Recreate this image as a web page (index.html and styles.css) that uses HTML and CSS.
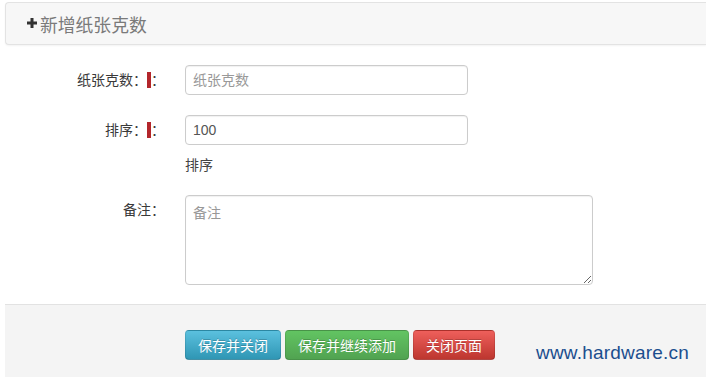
FILE: index.html
```html
<!DOCTYPE html>
<html lang="zh-CN">
<head>
  <meta charset="UTF-8" />
  <title>新增纸张克数</title>
  <link rel="stylesheet" href="styles.css">
</head>
<body>
  <div class="page">
    <!-- Heading -->
    <div class="panel-heading">
      <svg class="icon-plus" width="10" height="10" viewBox="0 0 10 10"><path d="M3.5 0h3v3.5H10v3H6.5V10h-3V6.5H0v-3h3.5z" fill="#333"/></svg>
      <span>新增纸张克数</span>
    </div>

    <!-- Form -->
    <form class="form">
      <div class="form-row">
        <label class="form-label">纸张克数：<span class="req"></span>：</label>
        <div class="form-field">
          <input class="input" type="text" placeholder="纸张克数">
        </div>
      </div>
      <div class="form-row">
        <label class="form-label">排序：<span class="req"></span>：</label>
        <div class="form-field">
          <input class="input" type="text" value="100">
          <div class="help">排序</div>
        </div>
      </div>
      <div class="form-row">
        <label class="form-label">备注：</label>
        <div class="form-field">
          <textarea class="textarea" placeholder="备注"></textarea>
        </div>
      </div>
    </form>

    <!-- Actions -->
    <div class="form-actions">
      <button type="button" class="btn btn-info">保存并关闭</button>
      <button type="button" class="btn btn-success">保存并继续添加</button>
      <button type="button" class="btn btn-danger">关闭页面</button>
    </div>

    <div class="watermark">www.hardware.cn</div>
  </div>
</body>
</html>
```

FILE: styles.css
```css
/* Base */
* { margin:0; padding:0; box-sizing:border-box; }
html, body { height:100%; }
body {
  font-family:"Liberation Sans","Noto Sans CJK SC",sans-serif;
  font-size:14px;
  color:#333;
  background:#fff;
  overflow:hidden;
}
.page {
  position:relative;
  margin-left:5px;
  min-height:100%;
  display:flex; flex-direction:column;
}

/* Heading */
.panel-heading {
  margin-top:2px;
  height:43px;
  display:flex; align-items:center; gap:3px;
  padding-left:21px;
  background:#f7f7f7;
  border:1px solid #e3e3e3;
  border-right:none;
  border-radius:4px 0 0 4px;
  box-shadow:0 1px 2px rgba(0,0,0,0.05);
  font-size:17.8px;
  color:#7a7a7a;
}
.icon-plus { flex:none; margin-top:-1px; }

/* Form */
.form {
  display:flex; flex-direction:column; gap:20px;
  padding:20px 0 19px;
}
.form-row {
  display:grid;
  grid-template-columns:160px 1fr;
  column-gap:20px;
}
.form-label {
  text-align:right;
  line-height:30px;
  height:30px;
  white-space:nowrap;
  color:#3a3a3a;
}
.req {
  display:inline-block;
  width:4px; height:16px;
  background:#b3262b;
  vertical-align:middle;
  margin-top:-2px;
}
.input {
  display:block;
  width:283px; height:30px;
  padding:0 7px;
  font-family:inherit; font-size:14px;
  color:#555;
  border:1px solid #ccc;
  border-radius:4px;
  box-shadow:inset 0 1px 1px rgba(0,0,0,0.06);
}
.textarea {
  display:block;
  width:408px; height:90px;
  padding:6px 7px;
  font-family:inherit; font-size:14px;
  color:#555;
  border:1px solid #ccc;
  border-radius:4px;
  box-shadow:inset 0 1px 1px rgba(0,0,0,0.06);
  resize:both;
}
.input::placeholder, .textarea::placeholder { color:#999; }
.help {
  margin-top:10px;
  line-height:20px;
  color:#444;
}

/* Actions */
.form-actions {
  flex:1;
  background:#f4f4f4;
  border-top:1px solid #e2e2e2;
  padding:25px 0 25px 180px;
  display:flex; gap:4px;
}
.btn {
  height:30px;
  padding:0 12px;
  font-family:inherit; font-size:14px;
  color:#fff;
  text-shadow:0 -1px 0 rgba(0,0,0,0.2);
  border:1px solid rgba(0,0,0,0.1);
  border-bottom-color:rgba(0,0,0,0.25);
  border-radius:4px;
  cursor:pointer;
}
.btn-info { background:linear-gradient(#5bc0de,#2f96b4); }
.btn-success { background:linear-gradient(#62c462,#51a351); }
.btn-danger { background:linear-gradient(#ee5f5b,#bd362f); }

/* Watermark */
.watermark {
  position:absolute;
  left:531px; top:342px;
  font-size:19px;
  color:#1b4e8e;
  letter-spacing:0.2px;
}
```
